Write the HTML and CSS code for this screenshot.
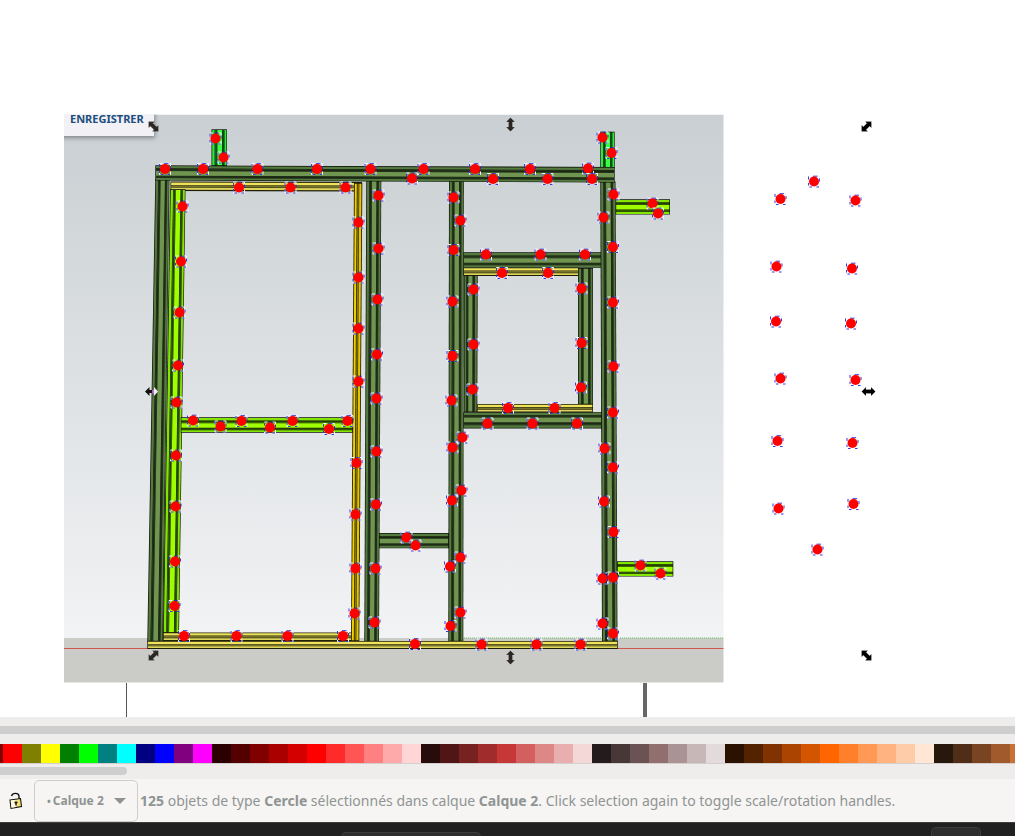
FILE: index.html
```html
<!DOCTYPE html>
<html lang="fr">
<head>
<meta charset="utf-8">
<title>Calque 2</title>
<link rel="stylesheet" href="styles.css">
</head>
<body>
<main class="canvas">
<svg class="drawing" viewBox="0 0 1015 717" role="img" aria-label="Plan d'ossature avec 125 cercles">
  <defs>
    <linearGradient id="sky" x1="0" y1="0" x2="0" y2="1">
      <stop offset="0" stop-color="#c9cfd2"/><stop offset="1" stop-color="#f2f3f5"/>
    </linearGradient>
    <filter id="soft" x="-20%" y="-40%" width="150%" height="200%"><feDropShadow dx="1" dy="2" stdDeviation="2" flood-opacity=".35"/></filter>
    <clipPath id="photo"><rect x="64" y="114.500" width="659.500" height="568"/></clipPath>
    <g id="dot">
      <path d="M-5.500-2.500V-5.500H-2.500M2.500-5.500H5.500V-2.500M5.500 2.500V5.500H2.500M-2.500 5.500H-5.500V2.500" fill="none" stroke="#f4f4ff" stroke-width="1"/>
      <path d="M-5.500-5V-2M-5.500 1.500V4M-4.500 5.500H-2M2.500 5.500H5M5.500-3V0M-1-5.300H3.500" fill="none" stroke="#2a22d0" stroke-width=".9"/>
      <circle r="5" fill="#f00"/>
    </g>
    <path id="arrow" d="M0-7 4.500-2.500H2V2.500H4.500L0 7-4.500 2.500H-2V-2.500H-4.500Z"/>
  </defs>
  <g clip-path="url(#photo)">
    <rect x="64" y="114.500" width="660" height="524" fill="url(#sky)"/>
    <rect x="64" y="638" width="660" height="45" fill="#cbccc7"/>
    <rect x="40" y="90" width="114" height="46" fill="#f1f1f6" filter="url(#soft)"/>
    <path d="M64 648.500H724" stroke="#d0574f"/>
    <path d="M464 638H724" stroke="#62bd5b" stroke-dasharray="1 1"/>
  </g>
  <text class="save" x="70" y="123">ENREGISTRER</text>
  <g id="beams"></g>
  <g id="dots"></g>
  <path d="M126.500 683V717" stroke="#555"/>
  <path d="M645 683V717" stroke="#666" stroke-width="4"/>
  <g fill="#2b2725" stroke="#fff" stroke-opacity=".35" stroke-width=".5">
    <use href="#arrow" transform="translate(510.500 124.500)"/>
    <use href="#arrow" transform="translate(510.500 657.500)"/>
    <use href="#arrow" transform="translate(153.500 126.500) rotate(-45)"/>
    <use href="#arrow" transform="translate(153.500 655.500) rotate(45)"/>
    <use href="#arrow" fill="#000" transform="translate(866.500 126.500) rotate(45)"/>
    <use href="#arrow" fill="#000" transform="translate(866.500 655.500) rotate(-45)"/>
    <use href="#arrow" fill="#000" transform="translate(868.500 391.500) rotate(90)"/>
  </g>
  <path d="M145 391.500 149.500 387V390H152V393H149.500V396Z" fill="#111"/>
  <path d="M158 391.500 154 387V390H152.500V393H154V396Z" fill="#eee"/>
  <path d="M153 390V394" stroke="#b14cc4" stroke-width="1.500"/>
</svg>
</main>
<div class="hscroll"><div class="hscroll-thumb"></div></div>
<section class="palette" aria-label="Palette">
  <div class="swatches" id="swatches"></div>
  <div class="palette-scroll"></div>
</section>
<footer class="status">
  <button class="lock" aria-label="Verrouiller le calque">
    <svg width="16" height="18" viewBox="0 0 16 18">
      <path d="M3.500 4C4.500 .5 10.500.5 11 4V8" fill="none" stroke="#111" stroke-width="1.400"/>
      <path d="M2 8 12.500 6.500 13.500 14.500 3 16.300Z" fill="#f5e07a" stroke="#111" stroke-width="1.100"/>
      <path d="M2.700 8.500 7 8 8 15 3.500 15.700Z" fill="#fffbe0"/>
      <path d="M8 9.500V13.500M6.500 10.500H9.500" stroke="#111" stroke-width="1.400"/>
    </svg>
  </button>
  <button class="layer"><span class="bullet">•</span><span>Calque 2</span><span class="caret"></span></button>
  <p class="message"><b>125</b> objets de type <b>Cercle</b> sélectionnés dans calque <b>Calque 2</b>. Click selection again to toggle scale/rotation handles.</p>
</footer>
<div class="taskbar"><div class="task task-wide"></div><div class="task task-small"></div></div>
<script src="app.js"></script>
</body>
</html>
```
FILE: styles.css
```css
* { box-sizing: border-box; }
body {
  margin: 0;
  min-height: 100vh;
  display: flex;
  flex-direction: column;
  background: #fff;
  font-family: "Noto Sans", "Open Sans", sans-serif;
  overflow: hidden;
}
.drawing { display: block; width: 100%; height: auto; }
.save { font: 700 11px "Noto Sans", sans-serif; fill: #1c4f7d; }
.hscroll { background: #eeedeb; padding: 9px 0; }
.hscroll-thumb { height: 8px; background: #cecece; }
.palette { background: #eeedeb; height: 36px; padding-top: 1px; }
.swatches { display: flex; height: 20px; overflow: hidden; border-bottom: 1px solid #d3cfcc; }
.swatch { flex: 0 0 19px; height: 19px; padding: 0; border: 0; }
.swatch:first-child { flex-basis: 3px; }
.palette-scroll { width: 127px; height: 8px; margin-top: 3px; background: #cecece; border-radius: 0 4px 4px 0; }
.status { display: flex; align-items: center; height: 43px; background: #f6f5f3; color: #8f9493; }
.lock { width: 34px; height: 40px; padding: 0 2px 0 0; border: 0; background: none; display: flex; align-items: center; justify-content: center; }
.layer {
  display: flex;
  align-items: center;
  width: 104px;
  height: 42px;
  padding: 0 11px 0 12px;
  border: 1px solid #cfcdca;
  border-radius: 5px;
  background: #f6f5f3;
  color: #8f9493;
  font: 700 12px "Noto Sans", sans-serif;
  white-space: nowrap;
}
.bullet { margin-right: 2px; font-size: 10px; }
.caret { margin-left: auto; border: 6px solid transparent; border-top-color: #8f9493; border-bottom: 0; }
.message { margin: 0 0 0 2px; font-size: 14px; white-space: nowrap; }
.taskbar { flex: 1; min-height: 15px; display: flex; align-items: flex-end; justify-content: space-between; background: #202020; border-top: 1px solid #41403e; padding: 0 34px 0 341px; }
.task { background: #2d2d2d; border: 1px solid #3b3b3b; border-bottom: 0; }
.task-wide { width: 140px; height: 5px; border-radius: 12px 12px 0 0; }
.task-small { width: 50px; height: 10px; border-radius: 5px 5px 0 0; }
```
FILE: app.js
```js
const NS = "http://www.w3.org/2000/svg";
const beams = document.getElementById("beams");
const dots = document.getElementById("dots");

// Stripe profiles: [start, end, colour] across the beam's width.
const tones = {
  green: ["#557a40", "#293c1e", "#6f9551"],
  lime: ["#84e600", "#3a6a00", "#9fff00"],
  neon: ["#2fe83c", "#14701c", "#3aff42"]
};
function wide(name) {
  const [mid, dark, light] = tones[name];
  return [[0, 1, "#10160b"], [.05, .2, mid], [.22, .28, dark], [.31, .37, dark], [.38, .68, light],
    [.71, .75, dark], [.77, .82, dark], [.84, .96, mid]];
}
const profiles = {
  green: wide("green"), lime: wide("lime"), neon: wide("neon"),
  greenFlip: wide("green").map(([a, b, c]) => [1 - b, 1 - a, c]),
  yellow: [[0, 1, "#1f1e08"], [.1, .36, "#eee35a"], [.4, .62, "#77722a"], [.67, .87, "#ddd45c"]],
  gold: [[0, 1, "#1f1a00"], [.1, .34, "#f0d000"], [.42, .58, "#927b00"], [.64, .9, "#e2c600"]]
};
function poly(points, fill) {
  const p = document.createElementNS(NS, "polygon");
  p.setAttribute("points", points.join(" "));
  p.setAttribute("fill", fill);
  beams.append(p);
}
const isBase = (a, b) => Math.abs(b - a) === 1;
function vertical(l1, r1, y1, l2, r2, y2, kind) {
  for (const [a, b, c] of profiles[kind]) {
    const w1 = r1 - l1, w2 = r2 - l2, e = isBase(a, b) ? 0 : .7;
    poly([l1 + a * w1, y1 + e, l1 + b * w1, y1 + e, l2 + b * w2, y2 - e, l2 + a * w2, y2 - e], c);
  }
}
function horizontal(x1, t1, b1, x2, t2, b2, kind) {
  for (const [a, b, c] of profiles[kind]) {
    const h1 = b1 - t1, h2 = b2 - t2, e = isBase(a, b) ? 0 : .7;
    poly([x1 + e, t1 + a * h1, x2 - e, t2 + a * h2, x2 - e, t2 + b * h2, x1 + e, t1 + b * h1], c);
  }
}
vertical(211.5, 227, 129.3, 211.5, 227, 166, "neon");
vertical(600.3, 614.7, 131.7, 600.3, 614.7, 168, "neon");
horizontal(615.5, 199.2, 214.5, 670, 199.2, 214.5, "lime");
horizontal(617, 561.3, 576.5, 673.3, 561.3, 576.5, "lime");
horizontal(170.5, 181.5, 191, 362, 182, 191.5, "yellow");
vertical(155.3, 169.5, 179, 147.3, 163, 641.5, "green");
vertical(170, 185.5, 189.3, 163, 179, 633, "lime");
horizontal(180.7, 417.3, 432.7, 353, 417.3, 432.7, "lime");
horizontal(163, 632.5, 641, 352, 632.5, 641, "yellow");
vertical(354, 362.3, 183, 351, 359.3, 641, "gold");
vertical(366.3, 381.3, 180, 364.3, 379, 641.5, "green");
horizontal(379, 533, 548.3, 449, 533, 548.3, "green");
vertical(464, 477.7, 274, 464, 477.3, 412.3, "greenFlip");
horizontal(463.3, 267.5, 276, 579, 267.5, 276, "yellow");
vertical(578, 593, 268, 578, 593, 404.5, "green");
horizontal(477.3, 404, 412.5, 593, 404, 412.5, "yellow");
horizontal(463.3, 252.3, 267.8, 602, 252.3, 267.8, "green");
horizontal(463.3, 412.3, 428.5, 602.3, 412.3, 428.5, "greenFlip");
vertical(449, 463.8, 181, 448.3, 463.3, 641.5, "green");
vertical(600.3, 615.5, 181.5, 602, 617.5, 641.5, "green");
horizontal(155.3, 165.3, 180.5, 614.7, 167, 182.5, "green");
horizontal(147.3, 641, 649, 617.8, 641, 649, "yellow");

const centres = [
  215.5,138.5, 223.5,157.5, 165,169, 203,169, 257.5,169, 317,169, 370.5,169, 423.5,169, 475,169, 530,169, 588,168.5,
  412,178.5, 493,179, 547.5,179, 592,179, 239,187.5, 290.5,187.5, 345.5,187.5,
  182.5,206.5, 181,261.5, 179.5,312.5, 178,365.5, 176.5,402.5, 176,455.5, 175.5,506.5, 175,561.5, 174.5,606,
  358.5,222.5, 358.5,277.5, 358.5,328.5, 358.5,381.5, 356.5,463, 355.5,514.5, 355.5,568.5, 354.5,613.5,
  378.5,195.5, 378.5,248.5, 377.5,299.5, 377,354.5, 376.5,398.5, 376.5,451.5, 376,504.5, 375.5,568.5, 374.5,622.5,
  453.5,197.5, 460.5,220.5, 453.5,250, 452.5,301.5, 452.5,356, 451.5,400.5, 462.5,437.5, 452.5,447.5, 461.5,490.5,
  452,500.5, 460.5,557.5, 450,566.5, 460.5,612.5, 450.5,626,
  486,254.5, 540.5,254.5, 585,254.5, 502,273, 548,273, 473.5,289.5, 473.5,344.5, 472.5,389.5,
  581.5,288.5, 581.5,343, 581,387.5, 508,408, 554.5,408, 487.5,423.5, 532.5,423.5, 577,423.5,
  602.5,137.5, 611.5,153, 613.5,194.5, 603.5,217.5, 613,247, 613,302.5, 613.5,366.5, 613,412.5, 604.5,448.5,
  613,467.5, 604,501.5, 613.5,532, 602.5,578.5, 613,577.5, 602.5,623.5, 613,633.5,
  652.5,203.5, 658,213.5, 640.5,565.5, 660.5,573.5,
  193,420.5, 220.5,426.5, 241.5,421, 270,427.5, 292.5,421, 329,429, 347.5,421,
  406.5,537.5, 415.5,545.5, 184,636, 236.5,636, 287.5,636, 343,636, 415,644, 481.5,644.5, 536.5,644.5, 580.5,644.5,
  814,181.5, 780.5,199, 855.5,200.5, 776.5,266.5, 852,268.5, 776,321.5, 851,323.5, 780.5,378.5, 855.5,380,
  777.5,441, 852.5,443, 778.5,508.5, 853.5,504, 817.5,549.5
];
for (let i = 0; i < centres.length; i += 2) {
  const u = document.createElementNS(NS, "use");
  u.setAttribute("href", "#dot");
  u.setAttribute("x", centres[i]);
  u.setAttribute("y", centres[i + 1]);
  dots.append(u);
}

const colours = `800000 ff0000 808000 ffff00 008000 00ff00 008080 00ffff 000080 0000ff 800080 ff00ff
2b0000 550000 800000 aa0000 d40000 ff0000 ff2a2a ff5555 ff8080 ffaaaa ffd5d5
280b0b 501616 782121 a02c2c c83737 d35f5f de8787 e9afaf f4d7d7
241c1c 483737 6c5353 916f6f ac9393 c8b7b7 e3dbdb
2b1100 552200 803300 aa4400 d45500 ff6600 ff7f2a ff9955 ffb380 ffccaa ffe6d5
28170b 502d16 784421 a05a2c c87137`.split(/\s+/);
const row = document.getElementById("swatches");
for (const c of colours) {
  const b = document.createElement("button");
  b.className = "swatch";
  b.style.background = "#" + c;
  b.setAttribute("aria-label", "#" + c);
  row.append(b);
}
```
